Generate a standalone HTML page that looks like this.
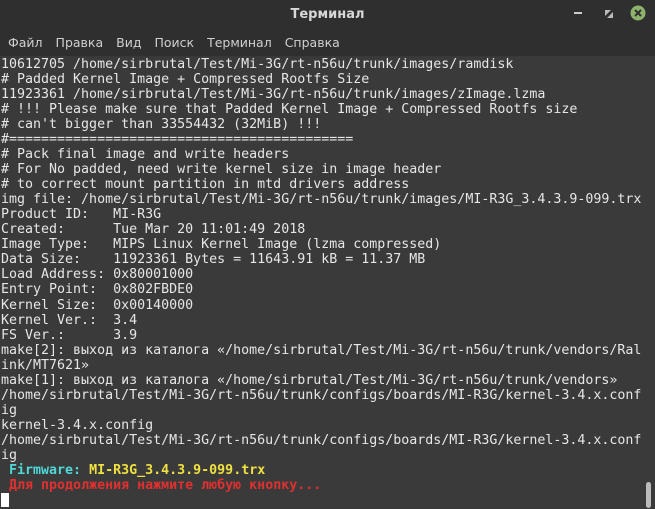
<!DOCTYPE html><html><head><meta charset="utf-8"><style>
body{margin:0;width:655px;height:508px;overflow:hidden;background:#383838;font-family:"DejaVu Sans","Liberation Sans",sans-serif}
#hd{position:absolute;left:0;top:0;width:655px;height:56px;background:#2f2f2f}
#title{position:absolute;top:7px;width:655px;text-align:center;color:#d8d8d8;font-weight:bold;font-size:13px}
#menu{position:absolute;top:35px;left:8px;color:#d0d0d0;font-size:12.5px;word-spacing:0}
#menu span{margin-right:13px}
#term{position:absolute;left:0;top:57px;width:655px;height:451px;background:#3a3a3a}
pre{margin:0;position:absolute;left:1px;top:57px;font-family:"DejaVu Sans Mono",monospace;font-size:13.3px;line-height:15.03px;color:#e6e6e6}
.c{color:#4fd8d8;font-weight:bold}.y{color:#f0e040;font-weight:bold}.r{color:#e03030;font-weight:bold}
.cur{display:inline-block;width:8px;height:14px;background:#fff;vertical-align:-2px}
</style></head><body>
<div id="hd"><div id="title">Терминал</div>
<div id="menu"><span>Файл</span><span>Правка</span><span>Вид</span><span>Поиск</span><span>Терминал</span><span>Справка</span></div>
<div style="position:absolute;left:574px;top:12px;width:8px;height:2px;background:#ccc"></div>
<svg style="position:absolute;left:603px;top:8px" width="12" height="12"><path d="M2 2h6l-6 6z M10 10h-6l6-6z" fill="#bbb"/></svg>
<svg style="position:absolute;left:630px;top:5px" width="16" height="16"><circle cx="8" cy="8" r="7.5" fill="#8db36a"/><path d="M5 5l6 6M11 5l-6 6" stroke="#2f2f2f" stroke-width="2"/></svg>
</div>
<div id="term"></div>
<div style="position:absolute;left:646px;top:482px;width:5px;height:26px;background:#bbb;border-radius:3px"></div>
<pre>10612705 /home/sirbrutal/Test/Mi-3G/rt-n56u/trunk/images/ramdisk
# Padded Kernel Image + Compressed Rootfs Size
11923361 /home/sirbrutal/Test/Mi-3G/rt-n56u/trunk/images/zImage.lzma
# !!! Please make sure that Padded Kernel Image + Compressed Rootfs size
# can't bigger than 33554432 (32MiB) !!!
#===========================================
# Pack final image and write headers
# For No padded, need write kernel size in image header
# to correct mount partition in mtd drivers address
img file: /home/sirbrutal/Test/Mi-3G/rt-n56u/trunk/images/MI-R3G_3.4.3.9-099.trx
Product ID:   MI-R3G
Created:      Tue Mar 20 11:01:49 2018
Image Type:   MIPS Linux Kernel Image (lzma compressed)
Data Size:    11923361 Bytes = 11643.91 kB = 11.37 MB
Load Address: 0x80001000
Entry Point:  0x802FBDE0
Kernel Size:  0x00140000
Kernel Ver.:  3.4
FS Ver.:      3.9
make[2]: выход из каталога «/home/sirbrutal/Test/Mi-3G/rt-n56u/trunk/vendors/Ral
ink/MT7621»
make[1]: выход из каталога «/home/sirbrutal/Test/Mi-3G/rt-n56u/trunk/vendors»
/home/sirbrutal/Test/Mi-3G/rt-n56u/trunk/configs/boards/MI-R3G/kernel-3.4.x.conf
ig
kernel-3.4.x.config
/home/sirbrutal/Test/Mi-3G/rt-n56u/trunk/configs/boards/MI-R3G/kernel-3.4.x.conf
ig
 <span class="c">Firmware:</span> <span class="y">MI-R3G_3.4.3.9-099.trx</span>
 <span class="r">Для продолжения нажмите любую кнопку...</span>
<span class="cur"></span></pre>
</body></html>
